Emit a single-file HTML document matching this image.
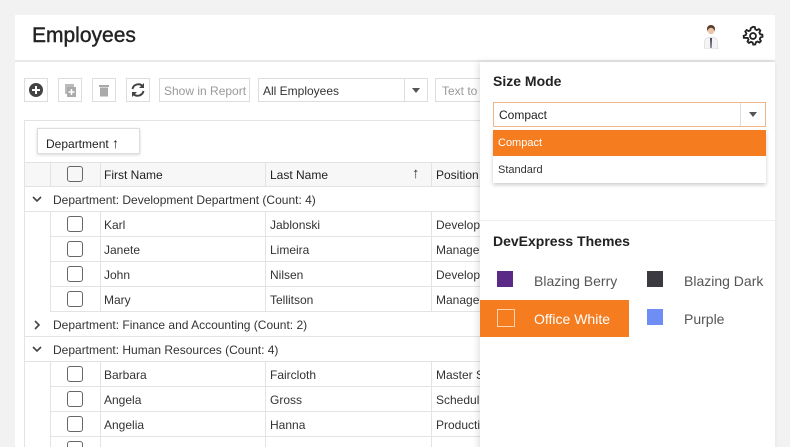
<!DOCTYPE html>
<html><head><style>
*{box-sizing:border-box;margin:0;padding:0}
html,body{width:790px;height:447px;overflow:hidden}
body{background:#f2f2f2;font-family:"Liberation Sans",sans-serif;position:relative;color:#333}
.card{position:absolute;left:15px;top:15px;width:760px;height:432px;background:#fff}
.abs{position:absolute}
.btn{position:absolute;top:78px;width:24px;height:24px;border:1px solid #ddd;background:#fff}
.t{font-size:12px;position:absolute;white-space:nowrap}
.row{position:absolute;left:50px;width:440px;height:25px;border-bottom:1px solid #e3e3e3}
.cb{position:absolute;left:17px;top:4px;width:16px;height:16px;border:1.5px solid #666;border-radius:3px}
.vl{position:absolute;top:0;height:25px;border-left:1px solid #e3e3e3}
.grp{position:absolute;left:25px;width:460px;height:25px;border-bottom:1px solid #e3e3e3}
</style></head><body>
<div class="card"></div>
<div class="abs" style="left:32px;top:24px;font-size:21px;color:#222;-webkit-text-stroke:.4px #222">Employees</div>
<div class="abs" style="left:15px;top:60px;width:760px;height:2px;background:#e8e8e8"></div>
<svg class="abs" style="left:700px;top:23px" width="22" height="26" viewBox="0 0 22 26"><circle cx="11" cy="6" r="4" fill="#5a3a28"/><circle cx="11" cy="8" r="3.2" fill="#e8c4a8"/><path d="M4 26 L5 16 Q11 12 17 16 L18 26Z" fill="#f4f4f4" stroke="#ccc" stroke-width=".5"/><path d="M10 15 L12 15 L11.5 25 L10.5 25Z" fill="#445"/></svg>
<svg class="abs" style="left:742px;top:25px" width="22" height="22" viewBox="0 0 24 24"><path d="M12 2l2 .3.5 2.4 1.7.9 2.2-1.1 1.6 1.5-1 2.3.8 1.7 2.4.6.2 2.2-2.3.8-.7 1.8 1.2 2.1-1.5 1.6-2.2-1.1-1.8.8-.6 2.4-2.2.2-.8-2.3-1.8-.7-2.1 1.2-1.6-1.5 1.1-2.2-.8-1.8L2 14l-.2-2.2 2.3-.8.7-1.8-1.2-2.1L5.1 5.5l2.2 1.1 1.8-.8.6-2.4z" fill="none" stroke="#222" stroke-width="2"/><circle cx="12" cy="12" r="3.2" fill="none" stroke="#222" stroke-width="2"/></svg>
<div class="btn" style="left:24px"><svg width="22" height="22"><circle cx="11" cy="11" r="7" fill="#444"/><path d="M11 7v8M7 11h8" stroke="#fff" stroke-width="2"/></svg></div>
<div class="btn" style="left:58px"><svg width="22" height="22"><rect x="6" y="5" width="9" height="10" fill="#bbb"/><rect x="8" y="8" width="9" height="10" fill="#aaa"/><path d="M12.5 10v6M9.5 13h6" stroke="#fff" stroke-width="1.5"/></svg></div>
<div class="btn" style="left:92px"><svg width="22" height="22"><rect x="6" y="6" width="10" height="2" fill="#aaa"/><rect x="7" y="8.5" width="8" height="9" fill="#aaa"/></svg></div>
<div class="btn" style="left:126px"><svg width="22" height="22"><path d="M5.5 10A6 6 0 0 1 16 7.5M16.5 12A6 6 0 0 1 6 14.5" fill="none" stroke="#444" stroke-width="2"/><path d="M17 4v5h-5z M5 18v-5h5z" fill="#444"/></svg></div>
<div class="btn" style="left:159px;width:91px"><span class="t" style="left:4px;top:5px;color:#999">Show in Report</span></div>
<div class="btn" style="left:258px;width:170px"><span class="t" style="left:4px;top:5px;color:#333">All Employees</span><div class="abs" style="left:145px;top:0;height:22px;border-left:1px solid #ddd;width:24px"><div class="abs" style="left:7px;top:9px;border:4px solid transparent;border-top:5px solid #555"></div></div></div>
<div class="btn" style="left:435px;width:60px"><span class="t" style="left:6px;top:5px;color:#999">Text to</span></div>
<div class="abs" style="left:24px;top:120px;width:470px;height:340px;border:1px solid #e3e3e3"></div>
<div class="abs" style="left:37px;top:128px;width:103px;height:26px;border:1px solid #ddd;box-shadow:0 1px 3px rgba(0,0,0,.15);background:#fff"><span class="t" style="left:8px;top:6px;color:#222">Department <b style="font-size:14px">&#8593;</b></span></div>
<div class="abs" style="left:25px;top:162px;width:460px;height:25px;background:#f7f7f7;border-top:1px solid #e3e3e3;border-bottom:1px solid #e3e3e3"></div>
<div class="row" style="top:162px;border-bottom:none"><div class="cb"></div><div class="vl" style="left:0"></div><div class="vl" style="left:50px"></div><div class="vl" style="left:215px"></div><div class="vl" style="left:381px"></div>
<span class="t" style="left:54px;top:6px;color:#222">First Name</span><span class="t" style="left:220px;top:6px;color:#222">Last Name</span><span class="t" style="left:362px;top:3px;font-size:15px;font-weight:bold">&#8593;</span><span class="t" style="left:386px;top:6px;color:#222">Position</span></div>
<div class="grp" style="top:187px"><svg class="abs" style="left:7px;top:9px" width="10" height="7"><path d="M1 1l4 4 4-4" fill="none" stroke="#444" stroke-width="1.6"/></svg><span class="t" style="left:28px;top:6px">Department: Development Department (Count: 4)</span></div>
<div class="row" style="top:212px"><div class="cb"></div><div class="vl" style="left:0"></div><div class="vl" style="left:50px"></div><div class="vl" style="left:215px"></div><div class="vl" style="left:381px"></div><span class="t" style="left:54px;top:6px">Karl</span><span class="t" style="left:220px;top:6px">Jablonski</span><span class="t" style="left:386px;top:6px">Develop</span></div>
<div class="row" style="top:237px"><div class="cb"></div><div class="vl" style="left:0"></div><div class="vl" style="left:50px"></div><div class="vl" style="left:215px"></div><div class="vl" style="left:381px"></div><span class="t" style="left:54px;top:6px">Janete</span><span class="t" style="left:220px;top:6px">Limeira</span><span class="t" style="left:386px;top:6px">Manage</span></div>
<div class="row" style="top:262px"><div class="cb"></div><div class="vl" style="left:0"></div><div class="vl" style="left:50px"></div><div class="vl" style="left:215px"></div><div class="vl" style="left:381px"></div><span class="t" style="left:54px;top:6px">John</span><span class="t" style="left:220px;top:6px">Nilsen</span><span class="t" style="left:386px;top:6px">Develop</span></div>
<div class="row" style="top:287px"><div class="cb"></div><div class="vl" style="left:0"></div><div class="vl" style="left:50px"></div><div class="vl" style="left:215px"></div><div class="vl" style="left:381px"></div><span class="t" style="left:54px;top:6px">Mary</span><span class="t" style="left:220px;top:6px">Tellitson</span><span class="t" style="left:386px;top:6px">Manage</span></div>
<div class="grp" style="top:312px"><svg class="abs" style="left:9px;top:8px" width="7" height="10"><path d="M1 1l4 4-4 4" fill="none" stroke="#444" stroke-width="1.6"/></svg><span class="t" style="left:28px;top:6px">Department: Finance and Accounting (Count: 2)</span></div>
<div class="grp" style="top:337px"><svg class="abs" style="left:7px;top:9px" width="10" height="7"><path d="M1 1l4 4 4-4" fill="none" stroke="#444" stroke-width="1.6"/></svg><span class="t" style="left:28px;top:6px">Department: Human Resources (Count: 4)</span></div>
<div class="row" style="top:362px"><div class="cb"></div><div class="vl" style="left:0"></div><div class="vl" style="left:50px"></div><div class="vl" style="left:215px"></div><div class="vl" style="left:381px"></div><span class="t" style="left:54px;top:6px">Barbara</span><span class="t" style="left:220px;top:6px">Faircloth</span><span class="t" style="left:386px;top:6px">Master S</span></div>
<div class="row" style="top:387px"><div class="cb"></div><div class="vl" style="left:0"></div><div class="vl" style="left:50px"></div><div class="vl" style="left:215px"></div><div class="vl" style="left:381px"></div><span class="t" style="left:54px;top:6px">Angela</span><span class="t" style="left:220px;top:6px">Gross</span><span class="t" style="left:386px;top:6px">Scheduli</span></div>
<div class="row" style="top:412px"><div class="cb"></div><div class="vl" style="left:0"></div><div class="vl" style="left:50px"></div><div class="vl" style="left:215px"></div><div class="vl" style="left:381px"></div><span class="t" style="left:54px;top:6px">Angelia</span><span class="t" style="left:220px;top:6px">Hanna</span><span class="t" style="left:386px;top:6px">Producti</span></div>
<div class="row" style="top:437px"><div class="cb"></div><div class="vl" style="left:0"></div><div class="vl" style="left:50px"></div><div class="vl" style="left:215px"></div><div class="vl" style="left:381px"></div></div>
<div class="abs" style="left:480px;top:62px;width:295px;height:390px;background:#fff;box-shadow:-2px 0 6px rgba(0,0,0,.12)"></div>
<div class="abs" style="left:493px;top:73px;font-size:14px;font-weight:bold;color:#222">Size Mode</div>
<div class="abs" style="left:493px;top:102px;width:273px;height:25px;border:1px solid #f0b88a;background:#fff"><span class="t" style="left:5px;top:5px;color:#222">Compact</span><div class="abs" style="left:246px;top:0;height:23px;border-left:1px solid #ddd;width:26px"><div class="abs" style="left:8px;top:9px;border:4px solid transparent;border-top:5px solid #555"></div></div></div>
<div class="abs" style="left:493px;top:130px;width:273px;height:53px;background:#fff;box-shadow:0 2px 4px rgba(0,0,0,.2)"></div>
<div class="abs" style="left:493px;top:130px;width:273px;height:26px;background:#f57c1f"><span class="t" style="left:5px;top:7px;color:#fff;font-size:11px">Compact</span></div>
<span class="t" style="left:498px;top:164px;font-size:11px">Standard</span>
<div class="abs" style="left:480px;top:220px;width:295px;height:1px;background:#eee"></div>
<div class="abs" style="left:493px;top:233px;font-size:14px;font-weight:bold;color:#222">DevExpress Themes</div>
<div class="abs" style="left:497px;top:271px;width:16px;height:16px;background:#5b2a86"></div>
<span class="t" style="left:534px;top:273px;font-size:14px;color:#555">Blazing Berry</span>
<div class="abs" style="left:647px;top:271px;width:16px;height:16px;background:#3a3a40"></div>
<span class="t" style="left:684px;top:273px;font-size:14px;color:#555">Blazing Dark</span>
<div class="abs" style="left:480px;top:300px;width:149px;height:37px;background:#f57c1f"></div>
<div class="abs" style="left:497px;top:309px;width:18px;height:18px;border:1px solid #fcd2b0"></div>
<span class="t" style="left:534px;top:311px;font-size:14px;color:#fff">Office White</span>
<div class="abs" style="left:647px;top:309px;width:16px;height:16px;background:#6e8ef5"></div>
<span class="t" style="left:684px;top:311px;font-size:14px;color:#555">Purple</span>
</body></html>
